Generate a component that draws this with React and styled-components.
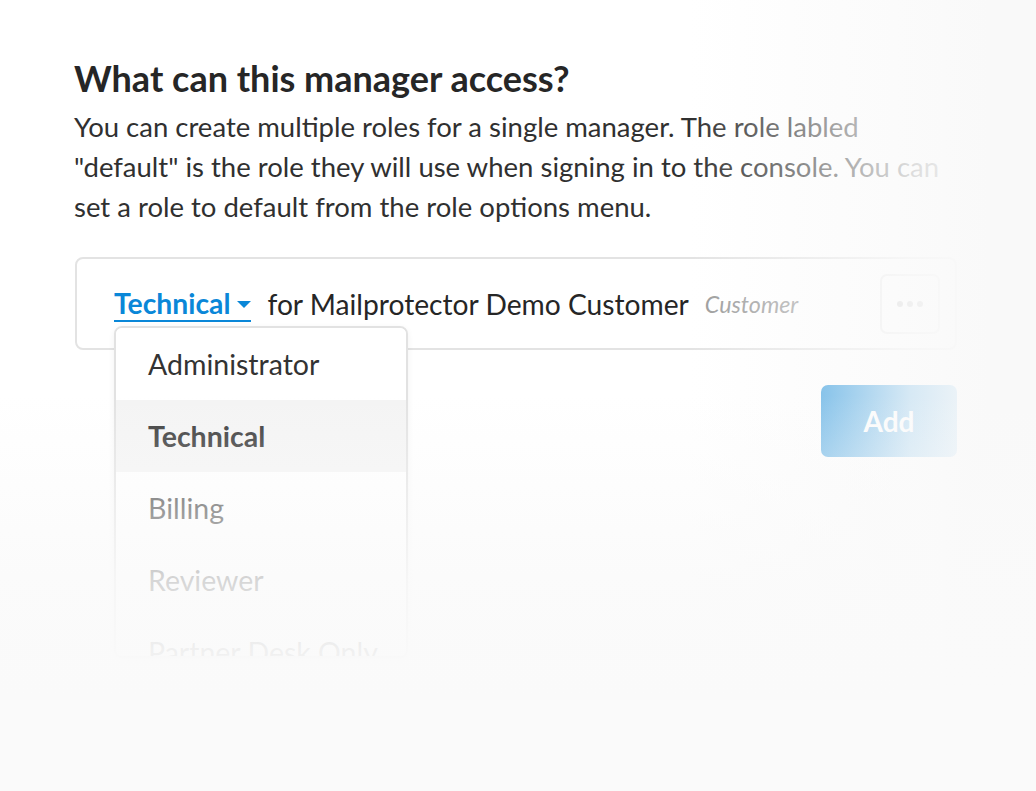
import React from "react";
import styled, { createGlobalStyle } from "styled-components";

const Global = createGlobalStyle`
  html, body { margin: 0; padding: 0; background: #ffffff; }
  body { font-family: Lato, "Open Sans", Arial, sans-serif; color: #2b2b2b; }
  * { box-sizing: border-box; }
`;

const Page = styled.div`
  position: relative;
  width: 1036px;
  height: 791px;
  overflow: hidden;
  background: #ffffff;
`;

const Content = styled.div`
  width: 883px;
  margin-left: 74px;
  padding-top: 52px;
  display: flex;
  flex-direction: column;
`;

const Title = styled.h2`
  margin: 0;
  font-size: 36px;
  line-height: 52px;
  font-weight: 700;
  color: #262626;
`;

const Intro = styled.p`
  margin: 3px 0 0;
  font-size: 27.5px;
  line-height: 40px;
  color: #303030;
  white-space: nowrap;
`;

const RoleCard = styled.div`
  margin-top: 30px;
  margin-left: 1px;
  height: 93px;
  border: 2px solid #e3e3e3;
  border-radius: 8px;
  display: flex;
  align-items: center;
  padding: 0 15px 0 37px;
`;

const RolePicker = styled.div`
  position: relative;
  margin-top: 1px;
`;

const RoleLink = styled.span`
  display: inline-flex;
  align-items: center;
  gap: 7px;
  font-size: 28.3px;
  font-weight: 700;
  color: #0a87d8;
  border-bottom: 2px solid #0a87d8;
  line-height: 32px;
  padding-bottom: 1px;
`;

const Caret = styled.svg`
  width: 14px;
  height: 8px;
  margin-top: 4px;
`;

const Scope = styled.span`
  margin-left: 16px;
  margin-top: 1px;
  font-size: 28.2px;
  color: #262626;
`;

const Kind = styled.span`
  margin-left: 16px;
  margin-top: 1px;
  font-size: 23.3px;
  font-style: italic;
  color: #9a9a9a;
`;

const Spacer = styled.div`
  flex: 1;
`;

const MoreButton = styled.div`
  width: 60px;
  height: 60px;
  border: 2px solid #e6e6e6;
  border-radius: 7px;
  display: flex;
  align-items: center;
  justify-content: center;
  gap: 4px;
`;

const Dot = styled.span`
  width: 6px;
  height: 6px;
  border-radius: 50%;
  background: #b8b8b8;
`;

const Menu = styled.div`
  position: absolute;
  left: 0;
  top: 39px;
  width: 294px;
  max-height: 332px;
  overflow: hidden;
  background: #ffffff;
  border: 2px solid #e2e2e2;
  border-radius: 8px;
  box-shadow: 0 2px 6px rgba(0, 0, 0, 0.06);
  z-index: 2;
`;

const MenuItem = styled.div`
  height: 72px;
  display: flex;
  align-items: center;
  padding-left: 32px;
  font-size: 28.5px;
  font-weight: ${(p) => (p.$active ? 700 : 400)};
  color: #333333;
  background: ${(p) => (p.$active ? "#f4f4f4" : "#ffffff")};
  white-space: nowrap;
`;

const Actions = styled.div`
  margin-top: 35px;
  display: flex;
  justify-content: flex-end;
`;

const AddButton = styled.button`
  width: 136px;
  height: 72px;
  border: none;
  border-radius: 7px;
  background: #0a87d8;
  color: #ffffff;
  font-family: Lato, "Open Sans", Arial, sans-serif;
  font-size: 28px;
  font-weight: 700;
`;

const FadeRight = styled.div`
  position: absolute;
  inset: 0;
  pointer-events: none;
  z-index: 5;
  background: linear-gradient(
    to right,
    rgba(250, 250, 250, 0) 0px,
    rgba(250, 250, 250, 0) 690px,
    rgba(250, 250, 250, 0.5) 815px,
    rgba(250, 250, 250, 0.85) 910px,
    rgba(249, 249, 249, 1) 990px
  );
`;

const FadeBottom = styled.div`
  position: absolute;
  inset: 0;
  pointer-events: none;
  z-index: 6;
  background: linear-gradient(
    to bottom,
    rgba(250, 250, 250, 0) 0px,
    rgba(250, 250, 250, 0) 395px,
    rgba(250, 250, 250, 0.18) 436px,
    rgba(250, 250, 250, 0.5) 508px,
    rgba(250, 250, 250, 0.82) 580px,
    rgba(250, 250, 250, 0.95) 650px,
    rgba(250, 250, 250, 1) 700px
  );
`;

const roles = ["Administrator", "Technical", "Billing", "Reviewer", "Partner Desk Only"];

export default function App() {
  return (
    <Page>
      <Global />
      <Content>
        <Title>What can this manager access?</Title>
        <Intro>
          You can create multiple roles for a single manager. The role labled
          <br />
          "default" is the role they will use when signing in to the console. You can
          <br />
          set a role to default from the role options menu.
        </Intro>
        <RoleCard>
          <RolePicker>
            <RoleLink>
              Technical
              <Caret viewBox="0 0 14 8">
                <path d="M0 0 L14 0 L7 7 Z" fill="#0a87d8" />
              </Caret>
            </RoleLink>
            <Menu>
              {roles.map((r) => (
                <MenuItem key={r} $active={r === "Technical"}>
                  {r}
                </MenuItem>
              ))}
            </Menu>
          </RolePicker>
          <Scope>for Mailprotector Demo Customer</Scope>
          <Kind>Customer</Kind>
          <Spacer />
          <MoreButton>
            <Dot />
            <Dot />
            <Dot />
          </MoreButton>
        </RoleCard>
        <Actions>
          <AddButton>Add</AddButton>
        </Actions>
      </Content>
      <FadeRight />
      <FadeBottom />
    </Page>
  );
}
